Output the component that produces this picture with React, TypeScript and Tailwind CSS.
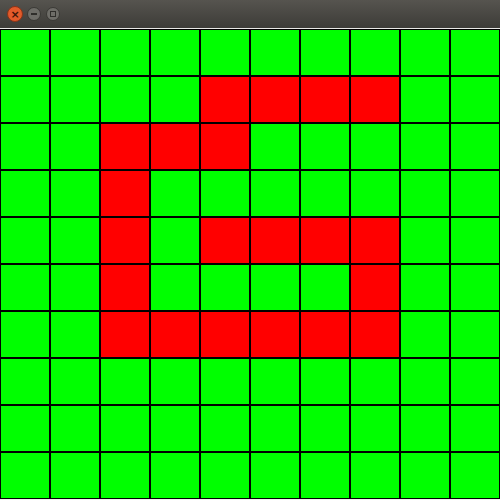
import React from 'react';

// red cells per row (col indices)
const RED: number[][] = [
  [],
  [4, 5, 6, 7],
  [2, 3, 4],
  [2],
  [2, 4, 5, 6, 7],
  [2, 7],
  [2, 3, 4, 5, 6, 7],
  [],
  [],
  [],
];

export default function App() {
  return (
    <div className="w-[500px] h-[500px] flex flex-col bg-[#f2f1f0] overflow-hidden">
      <div className="h-[28px] flex items-center pl-[7px] bg-gradient-to-b from-[#56544f] to-[#3d3c38] shrink-0">
        <div className="w-[16px] h-[16px] rounded-full bg-[#e25a2a] border border-[#8a3418] flex items-center justify-center text-[#3a1508] text-[11px] leading-none font-bold" style={{ fontFamily: '"DejaVu Sans", sans-serif' }}>×</div>
        <div className="ml-[4px] w-[14px] h-[14px] rounded-full bg-[#6e6d68] border border-[#3a3935] flex items-center justify-center">
          <div className="w-[6px] h-[2px] bg-[#2f2e2b]" />
        </div>
        <div className="ml-[5px] w-[14px] h-[14px] rounded-full bg-[#6e6d68] border border-[#3a3935] flex items-center justify-center">
          <div className="w-[6px] h-[6px] border border-[#2f2e2b]" />
        </div>
      </div>
      <div className="h-px bg-[#e8e8e6] shrink-0" />
      <div className="grid grid-cols-10 grid-rows-[repeat(10,47px)]">
        {RED.map((cols, r) =>
          Array.from({ length: 10 }).map((_, c) => (
            <div
              key={`${r}-${c}`}
              className={`border border-black ${cols.includes(c) ? 'bg-[#ff0000]' : 'bg-[#00ff00]'}`}
            />
          ))
        )}
      </div>
    </div>
  );
}
